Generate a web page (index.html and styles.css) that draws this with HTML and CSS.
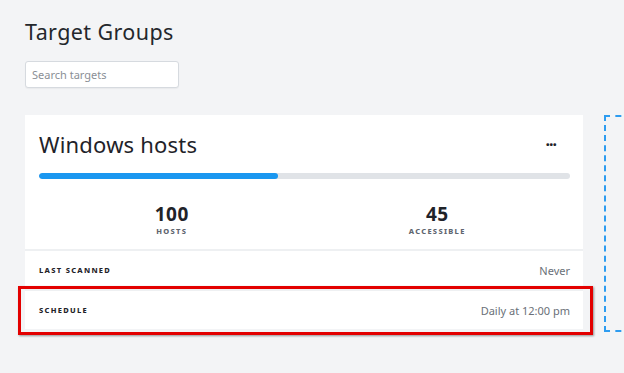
FILE: index.html
```html
<!DOCTYPE html>
<html>
<head>
<meta charset="utf-8">
<link rel="stylesheet" href="styles.css">
</head>
<body>
<div class="page">
  <h1 class="title">Target Groups</h1>
  <input class="search" type="text" placeholder="Search targets">
  <div class="groups">
    <div class="card">
      <div class="card-top">
        <div class="card-head">
          <h2 class="card-title">Windows hosts</h2>
          <span class="more">&middot;&middot;&middot;</span>
        </div>
        <div class="progress"><div class="progress-fill" style="width:45%"></div></div>
        <div class="stats">
          <div class="stat"><div class="stat-num">100</div><div class="stat-label">HOSTS</div></div>
          <div class="stat"><div class="stat-num">45</div><div class="stat-label">ACCESSIBLE</div></div>
        </div>
      </div>
      <div class="row">
        <span class="row-label">LAST SCANNED</span>
        <span class="row-value">Never</span>
      </div>
      <div class="row">
        <span class="row-label">SCHEDULE</span>
        <span class="row-value">Daily at 12:00 pm</span>
        <div class="highlight"></div>
      </div>
    </div>
    <div class="placeholder"></div>
  </div>
</div>
</body>
</html>
```

FILE: styles.css
```css
html {
  background: #f3f4f6;
  overflow: hidden;
}
body {
  margin: 0;
  padding: 0;
  min-height: 373px;
  font-family: "Noto Sans", "Open Sans", sans-serif;
  color: #1f2329;
}
.page {
  padding: 16px 0 0 25px;
}
.title {
  margin: 0;
  font-size: 21.5px;
  font-weight: 400;
  line-height: 32px;
  letter-spacing: 0.4px;
  color: #23272c;
}
.search {
  display: block;
  margin-top: 13px;
  box-sizing: border-box;
  width: 154px;
  height: 27px;
  border: 1px solid #d6dadf;
  border-radius: 3px;
  background: #fff;
  padding: 0 6px;
  font-family: inherit;
  font-size: 11px;
  color: #333;
  box-shadow: 0 1px 1px rgba(0,0,0,0.04);
}
.search::placeholder { color: #8a8f96; }
.groups {
  margin-top: 27px;
  display: grid;
  grid-template-columns: 558px 40px;
  column-gap: 21px;
  align-items: start;
}
.card {
  display: flex;
  flex-direction: column;
  gap: 2px;
  background: #eef0f2;
}
.card-top {
  background: #fff;
  padding: 14px 13px 0 14px;
  height: 120px;
}
.card-head {
  display: flex;
  align-items: center;
  justify-content: space-between;
}
.card-title {
  margin: 0;
  font-size: 22px;
  font-weight: 400;
  line-height: 30px;
  letter-spacing: 0.2px;
  color: #1f2329;
}
.more {
  font-size: 16px;
  font-weight: 700;
  letter-spacing: -1px;
  margin-right: 14px;
  line-height: 30px;
  color: #1f2329;
}
.progress {
  margin-top: 14px;
  height: 6px;
  border-radius: 3px;
  background: #e0e3e7;
  overflow: hidden;
}
.progress-fill {
  height: 100%;
  background: #1a97f0;
  border-radius: 3px;
}
.stats {
  display: grid;
  grid-template-columns: 1fr 1fr;
  margin-top: 25px;
}
.stat { text-align: center; }
.stat-num {
  font-size: 19px;
  font-weight: 700;
  line-height: 21px;
  letter-spacing: 0.5px;
  color: #1f2329;
}
.stat-label {
  font-size: 7.5px;
  font-weight: 800;
  letter-spacing: 1.3px;
  color: #5f6670;
  margin-top: 1px;
}
.row {
  position: relative;
  background: #fff;
  height: 38px;
  padding: 0 13px 0 14px;
  display: flex;
  align-items: center;
  justify-content: space-between;
}
.row-label {
  font-size: 7.5px;
  font-weight: 800;
  letter-spacing: 1.3px;
  color: #1f2329;
}
.row-value {
  font-size: 11px;
  color: #6a7078;
}
.highlight {
  position: absolute;
  left: -7px;
  right: -10px;
  top: -5px;
  bottom: -6px;
  border: 3px solid #e30000;
  box-shadow: 1px 1px 2px rgba(0,0,0,0.4);
}
.placeholder {
  border: 2px dashed #2d9cf0;
  border-right: none;
  height: 213px;
}
```
